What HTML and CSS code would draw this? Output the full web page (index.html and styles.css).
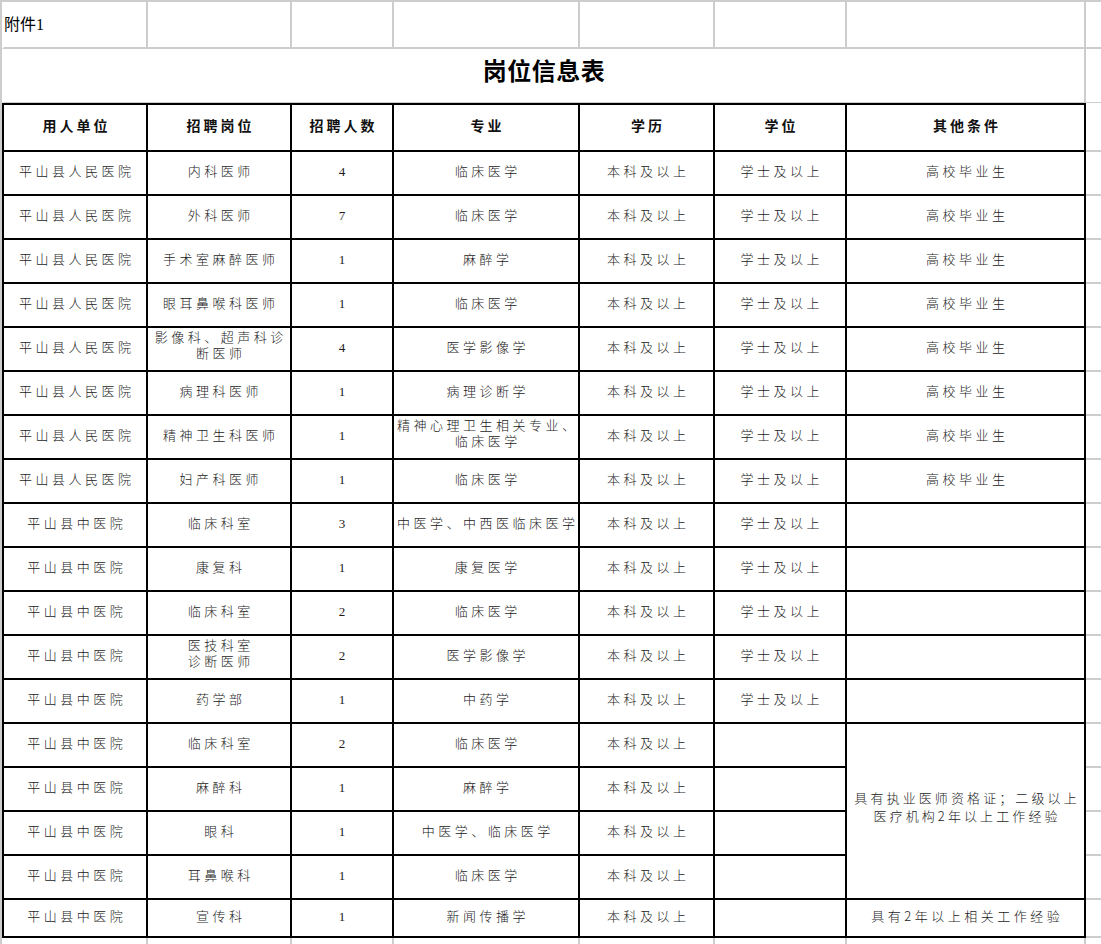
FILE: index.html
```html
<!DOCTYPE html>
<html lang="zh-CN">
<head>
<meta charset="utf-8">
<title>岗位信息表</title>
<link rel="stylesheet" href="styles.css">
</head>
<body>
<div class="sheet">
  <div class="c g fw note">附件1</div>
  <div class="c g"></div>
  <div class="c g"></div>
  <div class="c g"></div>
  <div class="c g"></div>
  <div class="c g"></div>
  <div class="c g"></div>
  <div class="c x"></div>

  <div class="c g fw title">岗位信息表</div>
  <div class="c x xt"></div>

  <div class="c h fb">用人单位</div>
  <div class="c h">招聘岗位</div>
  <div class="c h">招聘人数</div>
  <div class="c h">专业</div>
  <div class="c h">学历</div>
  <div class="c h">学位</div>
  <div class="c h">其他条件</div>
  <div class="c x"></div>

  <div class="c d fb">平山县人民医院</div><div class="c d">内科医师</div><div class="c d n">4</div><div class="c d">临床医学</div><div class="c d">本科及以上</div><div class="c d">学士及以上</div><div class="c d">高校毕业生</div><div class="c x"></div>
  <div class="c d fb">平山县人民医院</div><div class="c d">外科医师</div><div class="c d n">7</div><div class="c d">临床医学</div><div class="c d">本科及以上</div><div class="c d">学士及以上</div><div class="c d">高校毕业生</div><div class="c x"></div>
  <div class="c d fb">平山县人民医院</div><div class="c d">手术室麻醉医师</div><div class="c d n">1</div><div class="c d">麻醉学</div><div class="c d">本科及以上</div><div class="c d">学士及以上</div><div class="c d">高校毕业生</div><div class="c x"></div>
  <div class="c d fb">平山县人民医院</div><div class="c d">眼耳鼻喉科医师</div><div class="c d n">1</div><div class="c d">临床医学</div><div class="c d">本科及以上</div><div class="c d">学士及以上</div><div class="c d">高校毕业生</div><div class="c x"></div>
  <div class="c d fb">平山县人民医院</div><div class="c d ml">影像科、超声科诊<br>断医师</div><div class="c d n">4</div><div class="c d">医学影像学</div><div class="c d">本科及以上</div><div class="c d">学士及以上</div><div class="c d">高校毕业生</div><div class="c x"></div>
  <div class="c d fb">平山县人民医院</div><div class="c d">病理科医师</div><div class="c d n">1</div><div class="c d">病理诊断学</div><div class="c d">本科及以上</div><div class="c d">学士及以上</div><div class="c d">高校毕业生</div><div class="c x"></div>
  <div class="c d fb">平山县人民医院</div><div class="c d">精神卫生科医师</div><div class="c d n">1</div><div class="c d ml">精神心理卫生相关专业、<br>临床医学</div><div class="c d">本科及以上</div><div class="c d">学士及以上</div><div class="c d">高校毕业生</div><div class="c x"></div>
  <div class="c d fb">平山县人民医院</div><div class="c d">妇产科医师</div><div class="c d n">1</div><div class="c d">临床医学</div><div class="c d">本科及以上</div><div class="c d">学士及以上</div><div class="c d">高校毕业生</div><div class="c x"></div>
  <div class="c d fb">平山县中医院</div><div class="c d">临床科室</div><div class="c d n">3</div><div class="c d">中医学、中西医临床医学</div><div class="c d">本科及以上</div><div class="c d">学士及以上</div><div class="c d"></div><div class="c x"></div>
  <div class="c d fb">平山县中医院</div><div class="c d">康复科</div><div class="c d n">1</div><div class="c d">康复医学</div><div class="c d">本科及以上</div><div class="c d">学士及以上</div><div class="c d"></div><div class="c x"></div>
  <div class="c d fb">平山县中医院</div><div class="c d">临床科室</div><div class="c d n">2</div><div class="c d">临床医学</div><div class="c d">本科及以上</div><div class="c d">学士及以上</div><div class="c d"></div><div class="c x"></div>
  <div class="c d fb">平山县中医院</div><div class="c d ml">医技科室<br>诊断医师</div><div class="c d n">2</div><div class="c d">医学影像学</div><div class="c d">本科及以上</div><div class="c d">学士及以上</div><div class="c d"></div><div class="c x"></div>
  <div class="c d fb">平山县中医院</div><div class="c d">药学部</div><div class="c d n">1</div><div class="c d">中药学</div><div class="c d">本科及以上</div><div class="c d">学士及以上</div><div class="c d"></div><div class="c x"></div>
  <div class="c d fb">平山县中医院</div><div class="c d">临床科室</div><div class="c d n">2</div><div class="c d">临床医学</div><div class="c d">本科及以上</div><div class="c d"></div><div class="c d ml sans merged">具有执业医师资格证；二级以上<br>医疗机构2年以上工作经验</div><div class="c x"></div>
  <div class="c d fb">平山县中医院</div><div class="c d">麻醉科</div><div class="c d n">1</div><div class="c d">麻醉学</div><div class="c d">本科及以上</div><div class="c d"></div><div class="c x"></div>
  <div class="c d fb">平山县中医院</div><div class="c d">眼科</div><div class="c d n">1</div><div class="c d">中医学、临床医学</div><div class="c d">本科及以上</div><div class="c d"></div><div class="c x"></div>
  <div class="c d fb">平山县中医院</div><div class="c d">耳鼻喉科</div><div class="c d n">1</div><div class="c d">临床医学</div><div class="c d">本科及以上</div><div class="c d"></div><div class="c x"></div>
  <div class="c d fb">平山县中医院</div><div class="c d">宣传科</div><div class="c d n">1</div><div class="c d">新闻传播学</div><div class="c d">本科及以上</div><div class="c d"></div><div class="c d sans">具有2年以上相关工作经验</div><div class="c x"></div>

  <div class="c z fw"></div>
  <div class="c z"></div>
  <div class="c z"></div>
  <div class="c z"></div>
  <div class="c z"></div>
  <div class="c z"></div>
  <div class="c z"></div>
  <div class="c"></div>
</div>
</body>
</html>
```
FILE: styles.css
```css
html, body {
  margin: 0;
  padding: 0;
  overflow: hidden;
  background: #ffffff;
}

.sheet {
  display: grid;
  grid-template-columns: 146px 144px 102px 186px 135px 132px 239px 15px;
  grid-template-rows: 47px 54px 49px repeat(17, 44px) 38px 6px;
  width: 1099px;
  border-top: 2px solid #cdcdcd;
  border-left: 2px solid #cdcdcd;
  font-family: "Liberation Serif", "Noto Sans CJK SC", serif;
  color: #1a1a1a;
}

.c {
  box-sizing: border-box;
  display: flex;
  align-items: center;
  justify-content: center;
  text-align: center;
  white-space: nowrap;
  overflow: hidden;
}

.g {
  border-right: 2px solid #cdcdcd;
  border-bottom: 2px solid #cdcdcd;
}

.fw {
  border-left: 2px solid #ffffff;
}

.note {
  justify-content: flex-start;
  font-size: 16px;
  padding-bottom: 4px;
  color: #000;
}

.title {
  grid-column: span 7;
  border-bottom-width: 1px;
  font-family: "Noto Sans CJK SC", sans-serif;
  font-weight: bold;
  font-size: 24px;
  letter-spacing: 0.5px;
  padding-bottom: 13px;
  color: #000;
}

.x {
  grid-column: 8;
  border-bottom: 2px solid #cdcdcd;
}

.xt {
  border-bottom-width: 1px;
}

.h {
  border-top: 2px solid #000;
  border-right: 2px solid #000;
  border-bottom: 2px solid #000;
  font-size: 14px;
  font-weight: bold;
  letter-spacing: 3px;
  padding-left: 3px;
  padding-bottom: 5px;
  color: #111;
}

.d {
  border-right: 2px solid #000;
  border-bottom: 2px solid #000;
  font-size: 13px;
  font-weight: 300;
  letter-spacing: 3.5px;
  padding-left: 3.5px;
  padding-bottom: 5px;
  color: #1a1a1a;
}

.fb {
  border-left: 2px solid #000;
}

.n {
  font-size: 13px;
  letter-spacing: 0;
  padding-left: 0;
  padding-bottom: 2px;
  font-weight: normal;
}

.sans {
  font-family: "Noto Sans CJK SC", sans-serif;
}

.ml {
  line-height: 16px;
  padding-bottom: 7px;
}

.merged {
  grid-row: span 4;
  line-height: 18px;
  letter-spacing: 3.1px;
  padding-left: 3.1px;
  padding-bottom: 8px;
}

.z {
  border-right: 2px solid #cdcdcd;
}
```
